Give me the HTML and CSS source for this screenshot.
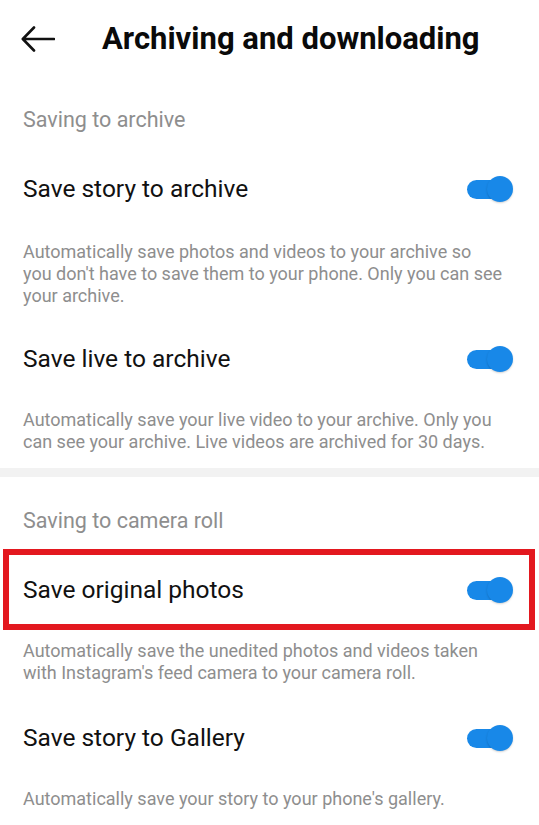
FILE: index.html
```html
<!DOCTYPE html>
<html lang="en">
<head>
<meta charset="utf-8">
<title>Archiving and downloading</title>
<link rel="stylesheet" href="styles.css">
</head>
<body>
<header class="topbar">
  <svg class="back" width="34" height="28" viewBox="0 0 34 28" aria-hidden="true">
    <path d="M33 14H2M13 2.5L1.8 14L13 25.5" fill="none" stroke="#111" stroke-width="2.6" stroke-linecap="round" stroke-linejoin="round"/>
  </svg>
  <h1 class="title">Archiving and downloading</h1>
</header>

<section class="group">
  <h2 class="group-title">Saving to archive</h2>
  <div class="setting">
    <div class="row">
      <span class="label">Save story to archive</span>
      <span class="toggle"><span class="track"></span><span class="thumb"></span></span>
    </div>
    <p class="desc first">Automatically save photos and videos to your archive so<br>you don't have to save them to your phone. Only you can see<br>your archive.</p>
  </div>
  <div class="setting">
    <div class="row">
      <span class="label">Save live to archive</span>
      <span class="toggle"><span class="track"></span><span class="thumb"></span></span>
    </div>
    <p class="desc">Automatically save your live video to your archive. Only you<br>can see your archive. Live videos are archived for 30 days.</p>
  </div>
</section>

<div class="divider"></div>

<section class="group">
  <h2 class="group-title second">Saving to camera roll</h2>
  <div class="setting">
    <div class="row highlight">
      <span class="label">Save original photos</span>
      <span class="toggle"><span class="track"></span><span class="thumb"></span></span>
    </div>
    <p class="desc">Automatically save the unedited photos and videos taken<br>with Instagram's feed camera to your camera roll.</p>
  </div>
  <div class="setting">
    <div class="row">
      <span class="label">Save story to Gallery</span>
      <span class="toggle"><span class="track"></span><span class="thumb"></span></span>
    </div>
    <p class="desc">Automatically save your story to your phone's gallery.</p>
  </div>
</section>
</body>
</html>
```

FILE: styles.css
```css
* { box-sizing: border-box; }

html, body {
  margin: 0;
  padding: 0;
  background: #ffffff;
}

body {
  font-family: Roboto, "Noto Sans", "Liberation Sans", sans-serif;
  color: #111111;
  width: 539px;
  overflow: hidden;
}

.topbar {
  height: 78px;
  display: flex;
  align-items: center;
  padding-left: 21px;
}

.back {
  display: block;
  flex: none;
}

.title {
  margin: 0 0 0 47px;
  font-size: 31px;
  font-weight: 700;
  color: #0a0a0a;
  line-height: 36px;
  white-space: nowrap;
}

.group-title {
  margin: 0;
  padding: 18px 23px 0;
  font-size: 21.5px;
  font-weight: 400;
  line-height: 48px;
  color: #8e8e8e;
}

.group-title.second {
  padding-top: 20px;
}

.setting + .setting {
  margin-top: 26px;
}

.group-title + .setting .row {
  margin-top: 17px;
}

.row {
  height: 56px;
  display: flex;
  align-items: center;
  justify-content: space-between;
  padding: 0 26px 0 23px;
}

.label {
  font-size: 24.5px;
  line-height: 30px;
  color: #111111;
}

.desc {
  margin: 0;
  padding: 22px 8px 0 23px;
  font-size: 18px;
  line-height: 22px;
  color: #8e8e8e;
  white-space: nowrap;
}

.desc.first {
  padding-top: 24px;
}

.desc.first + * {
  margin-top: 0;
}

.toggle {
  position: relative;
  width: 46px;
  height: 26px;
  flex: none;
}

.track {
  position: absolute;
  left: 0;
  top: 4px;
  width: 40px;
  height: 19px;
  border-radius: 10px;
  background: #1888e8;
}

.thumb {
  position: absolute;
  right: 0;
  top: 0;
  width: 26px;
  height: 26px;
  border-radius: 50%;
  background: #1888e8;
  box-shadow: 0 1px 2px rgba(0, 0, 0, 0.18);
}

.divider {
  margin-top: 15px;
  height: 9px;
  background: #f2f2f2;
}

.highlight {
  position: relative;
}

.highlight::after {
  content: "";
  position: absolute;
  left: 3px;
  right: 4px;
  top: -13px;
  bottom: -12px;
  border: 6px solid #e3181f;
  pointer-events: none;
}

.group:first-of-type .setting + .setting {
  margin-top: 24px;
}
```
